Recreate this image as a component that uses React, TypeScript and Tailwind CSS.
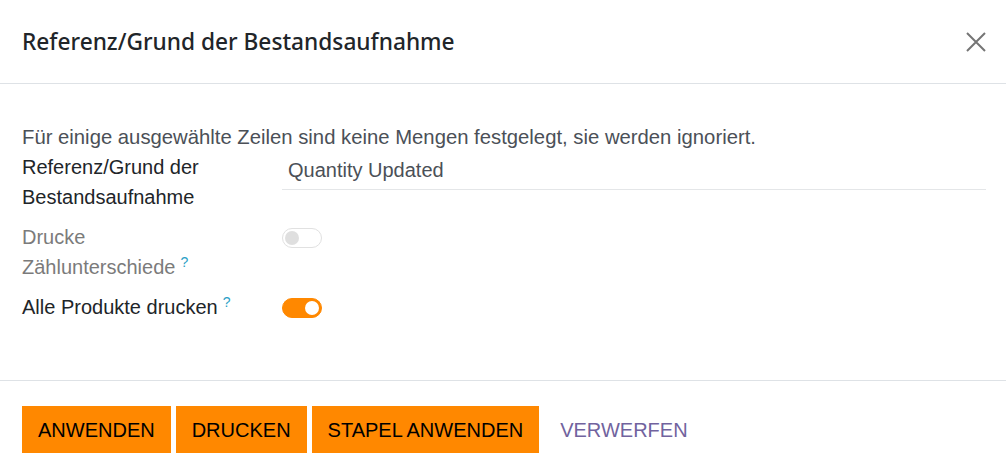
import { useState } from "react";

const Toggle = ({ checked, disabled }: { checked: boolean; disabled?: boolean }) => {
  return (
    <span
      className={`flex h-[20px] w-[40px] items-center rounded-full border px-[2px] ${
        checked ? "justify-end border-[#ff8800] bg-[#ff8800]" : "justify-start border-[#dedede] bg-white"
      } ${disabled ? "opacity-90" : ""}`}
    >
      <span className={`h-[14px] w-[14px] rounded-full ${checked ? "bg-white" : "bg-[#dcdcdc]"}`} />
    </span>
  );
};

const Help = () => <sup className="ml-[5px] text-[14px] text-[#2b9fc6]">?</sup>;

export default function App() {
  const [reason] = useState("Quantity Updated");

  return (
    <div className="flex h-[472px] w-[1006px] flex-col bg-white font-['Liberation_Sans',Arial,sans-serif] text-[20px] leading-[30px] text-[#212529]">
      {/* Header */}
      <div className="flex h-[84px] shrink-0 items-center justify-between border-b border-[#dee2e6] pl-[22px] pr-[20px]">
        <h4 className="font-['Noto_Sans',sans-serif] text-[22.7px] font-medium text-[#212529]">
          Referenz/Grund der Bestandsaufnahme
        </h4>
        <button type="button" className="flex h-[20px] w-[20px] items-center justify-center">
          <svg width="20" height="20" viewBox="0 0 20 20" fill="none">
            <path d="M1 1L19 19M19 1L1 19" stroke="#757575" strokeWidth="2" />
          </svg>
        </button>
      </div>

      {/* Body */}
      <div className="flex-1 pl-[22px] pr-[20px] pt-[38px]">
        <p className="text-[20.3px] text-[#4b5057]">
          Für einige ausgewählte Zeilen sind keine Mengen festgelegt, sie werden ignoriert.
        </p>

        <div className="grid grid-cols-[260px_1fr]">
          <label>
            Referenz/Grund der
            <br />
            Bestandsaufnahme
          </label>
          <div className="self-start border-b border-[#e4e6e8] pb-[4px] pl-[6px] pt-[3px] text-[#4b5057]">{reason}</div>
        </div>

        <div className="mt-[10px] grid grid-cols-[260px_1fr]">
          <label className="text-[#7b7b7b]">
            Drucke
            <br />
            Zählunterschiede
            <Help />
          </label>
          <div className="flex items-start pt-[6px]">
            <Toggle checked={false} disabled />
          </div>
        </div>

        <div className="mt-[10px] grid grid-cols-[260px_1fr]">
          <label>
            Alle Produkte drucken
            <Help />
          </label>
          <div className="flex items-start pt-[6px]">
            <Toggle checked />
          </div>
        </div>
      </div>

      {/* Footer */}
      <div className="flex h-[92px] shrink-0 items-start gap-[5px] border-t border-[#dee2e6] pl-[22px] pt-[25px]">
        <button type="button" className="flex h-[47px] items-center bg-[#ff8800] px-[16px] text-black">
          ANWENDEN
        </button>
        <button type="button" className="flex h-[47px] items-center bg-[#ff8800] px-[16px] text-black">
          DRUCKEN
        </button>
        <button type="button" className="flex h-[47px] items-center bg-[#ff8800] px-[16px] text-black">
          STAPEL ANWENDEN
        </button>
        <button type="button" className="flex h-[47px] items-center px-[16px] text-[#71639e]">
          VERWERFEN
        </button>
      </div>
    </div>
  );
}
